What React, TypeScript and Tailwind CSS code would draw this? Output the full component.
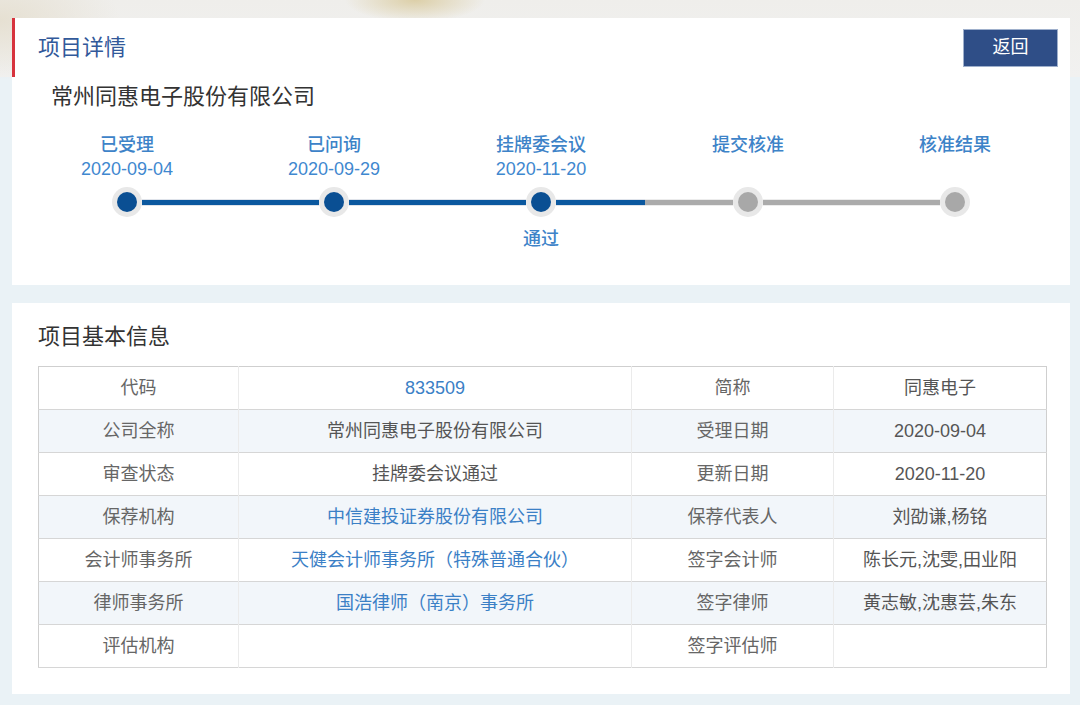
import React from 'react';

type Step = { label: string; date?: string; note?: string; done: boolean };

const steps: Step[] = [
  { label: '已受理', date: '2020-09-04', done: true },
  { label: '已问询', date: '2020-09-29', done: true },
  { label: '挂牌委会议', date: '2020-11-20', note: '通过', done: true },
  { label: '提交核准', done: false },
  { label: '核准结果', done: false },
];

type Cell = { text: string; link?: boolean };

const rows: [string, Cell, string, Cell][] = [
  ['代码', { text: '833509', link: true }, '简称', { text: '同惠电子' }],
  ['公司全称', { text: '常州同惠电子股份有限公司' }, '受理日期', { text: '2020-09-04' }],
  ['审查状态', { text: '挂牌委会议通过' }, '更新日期', { text: '2020-11-20' }],
  ['保荐机构', { text: '中信建投证券股份有限公司', link: true }, '保荐代表人', { text: '刘劭谦,杨铭' }],
  ['会计师事务所', { text: '天健会计师事务所（特殊普通合伙）', link: true }, '签字会计师', { text: '陈长元,沈雯,田业阳' }],
  ['律师事务所', { text: '国浩律师（南京）事务所', link: true }, '签字律师', { text: '黄志敏,沈惠芸,朱东' }],
  ['评估机构', { text: '' }, '签字评估师', { text: '' }],
];

function Segment({ show, blue }: { show: boolean; blue: boolean }) {
  if (!show) return <div className="flex-1" />;
  return (
    <div className={`flex-1 h-[7px] ${blue ? 'bg-[#dfe3ea]' : 'bg-[#ececec]'} flex items-center`}>
      <div className={`w-full h-[5px] ${blue ? 'bg-[#0b589f]' : 'bg-[#ababab]'}`} />
    </div>
  );
}

export default function App() {
  return (
    <div
      className="w-full min-h-[705px] pt-[18px] pl-[12px] pr-[10px] pb-[11px] bg-[radial-gradient(ellipse_70px_22px_at_415px_0px,#dccfa8,transparent),radial-gradient(ellipse_120px_60px_at_0px_20px,#e6e0d2,transparent),linear-gradient(to_bottom,#efeeeb_0px,#f1f1f0_77px,#eaf2f6_77px)]"
      style={{ fontFamily: '"Liberation Sans", "Noto Sans CJK SC", sans-serif' }}
    >
      {/* Project detail card */}
      <div className="bg-white h-[267px] flex flex-col">
        <div className="h-[59px] border-l-[3px] border-[#d7333d] flex items-center justify-between pl-[23px] pr-[12px]">
          <h2 className="text-[22px] leading-[30px] text-[#32599a]">项目详情</h2>
          <button className="w-[95px] h-[38px] bg-[#2f4e87] border border-[#9fb0cc] text-white text-[18px]">
            返回
          </button>
        </div>

        <p className="mt-[6px] pl-[39px] text-[22px] leading-[28px] text-[#333]">常州同惠电子股份有限公司</p>

        <div className="mt-[22px] ml-[11.5px] w-[1035px] grid grid-cols-5">
          {steps.map((s, i) => (
            <div key={s.label} className="flex flex-col items-center">
              <div className="text-[18px] leading-[24px] font-medium text-[#3d83c8]">{s.label}</div>
              <div className="text-[18px] leading-[24px] text-[#3f88cf] h-[24px]">{s.date ?? ''}</div>
              <div className="mt-[6px] w-full h-[30px] flex items-center">
                <Segment show={i > 0} blue={i <= 2} />
                <div className="w-[30px] h-[30px] rounded-full bg-[#e8e8e8] flex items-center justify-center shrink-0">
                  <div className={`w-[20px] h-[20px] rounded-full ${s.done ? 'bg-[#0a4f93]' : 'bg-[#a8a8a8]'}`} />
                </div>
                <Segment show={i < 4} blue={i <= 2} />
              </div>
              <div className="mt-[10px] text-[18px] leading-[24px] font-medium text-[#3d83c8] h-[24px]">{s.note ?? ''}</div>
            </div>
          ))}
        </div>
      </div>

      {/* Basic info card */}
      <div className="mt-[18px] bg-white pt-[19px] pl-[26px] pr-[24px] pb-[26px]">
        <h2 className="text-[22px] leading-[30px] text-[#333]">项目基本信息</h2>
        <table className="mt-[14px] w-[1008px] border-collapse border border-[#cfcfcf] text-[18px] table-fixed">
          <colgroup>
            <col className="w-[200px]" />
            <col className="w-[393px]" />
            <col className="w-[202px]" />
            <col className="w-[213px]" />
          </colgroup>
          <tbody>
            {rows.map(([k1, v1, k2, v2], i) => (
              <tr key={k1} className={`h-[43px] border-b border-[#d6d6d6] ${i % 2 === 1 ? 'bg-[#f2f6fa]' : 'bg-white'}`}>
                <td className="text-center text-[#666] border-r border-[#ebebeb] p-0">{k1}</td>
                <td className={`text-center border-r border-[#ebebeb] p-0 ${v1.link ? 'text-[#3b80c6]' : 'text-[#555]'}`}>{v1.text}</td>
                <td className="text-center text-[#666] border-r border-[#ebebeb] p-0">{k2}</td>
                <td className={`text-center p-0 ${v2.link ? 'text-[#3b80c6]' : 'text-[#555]'}`}>{v2.text}</td>
              </tr>
            ))}
          </tbody>
        </table>
      </div>
    </div>
  );
}
